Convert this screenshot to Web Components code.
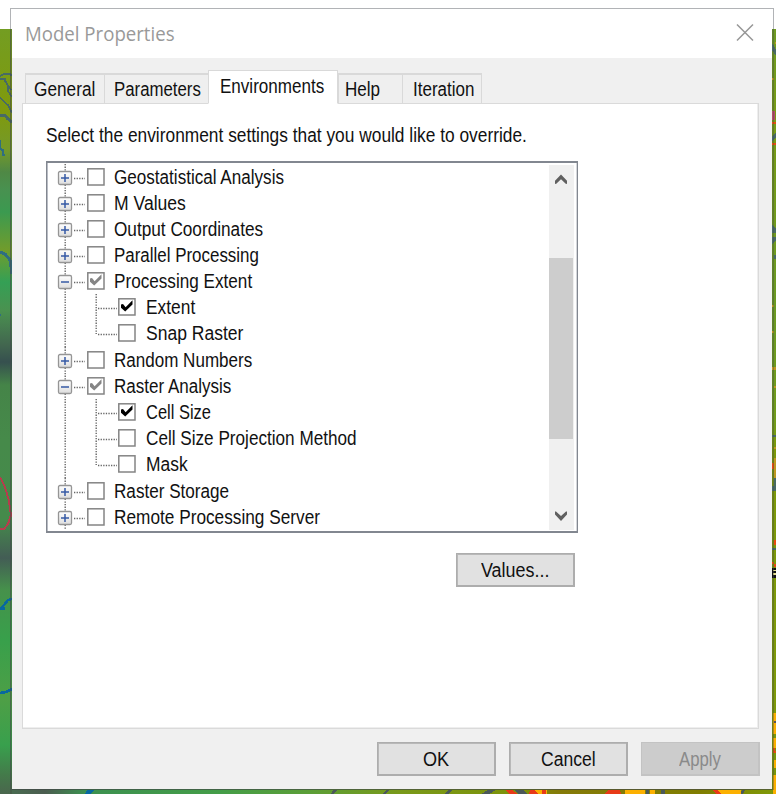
<!DOCTYPE html>
<html lang="en">
<head>
<meta charset="utf-8">
<title>Model Properties</title>
<style>
html,body{margin:0;width:776px;height:794px;overflow:hidden;background:#fff}
body{position:relative;font:19.5px "Liberation Sans",Arial,sans-serif;color:#111}
</style>
</head>
<body>
<map-backdrop></map-backdrop>
<dialog-window>
  <fit-text slot="title" w="150" style="font-family:'Open Sans','Noto Sans',sans-serif;font-size:19.5px;color:#999">Model Properties</fit-text>
  <tab-strip slot="tabs">
    <tab-item style="width:79px;padding-left:8px"><fit-text w="61">General</fit-text></tab-item>
    <tab-item style="width:104px;padding-left:9px"><fit-text w="87">Parameters</fit-text></tab-item>
    <tab-item active style="width:130px;padding-left:11px"><fit-text w="104">Environments</fit-text></tab-item>
    <tab-item style="width:64px;padding-left:6px"><fit-text w="35">Help</fit-text></tab-item>
    <tab-item style="width:80px;padding-left:10px"><fit-text w="61">Iteration</fit-text></tab-item>
  </tab-strip>
  <fit-text slot="prompt" w="481">Select the environment settings that you would like to override.</fit-text>
  <tree-view slot="tree">
    <tree-row w="170">Geostatistical Analysis</tree-row>
    <tree-row w="72">M Values</tree-row>
    <tree-row w="149">Output Coordinates</tree-row>
    <tree-row w="145">Parallel Processing</tree-row>
    <tree-row w="138" open check="mixed">Processing Extent</tree-row>
    <tree-row w="49" child check="on">Extent</tree-row>
    <tree-row w="97" child last tall>Snap Raster</tree-row>
    <tree-row w="138">Random Numbers</tree-row>
    <tree-row w="117" open check="mixed">Raster Analysis</tree-row>
    <tree-row w="65" child check="on">Cell Size</tree-row>
    <tree-row w="211" child>Cell Size Projection Method</tree-row>
    <tree-row w="42" child last tall>Mask</tree-row>
    <tree-row w="115">Raster Storage</tree-row>
    <tree-row w="206">Remote Processing Server</tree-row>
  </tree-view>
  <push-button slot="values"><fit-text w="68">Values...</fit-text></push-button>
  <push-button slot="actions"><fit-text w="26">OK</fit-text></push-button>
  <push-button slot="actions"><fit-text w="55">Cancel</fit-text></push-button>
  <push-button slot="actions" disabled><fit-text w="42">Apply</fit-text></push-button>
</dialog-window>
<script>
const shadow = (el, html) => { el.attachShadow({mode:'open'}).innerHTML = html; return el.shadowRoot; };

/* Text condensed or widened to a set width. */
customElements.define('fit-text', class extends HTMLElement {
  connectedCallback() {
    if (this.shadowRoot) return;
    const w = +this.getAttribute('w');
    const r = shadow(this, `<style>:host{display:block;flex:none;width:${w}px;height:24px;line-height:24px;white-space:nowrap}
      span{display:inline-block;transform-origin:0 50%}</style><span><slot></slot></span>`);
    const s = r.querySelector('span');
    const fit = () => { const n = s.offsetWidth; if (n) s.style.transform = `scaleX(${w / n})`; };
    this.fit = fit; fit();
  }
});

customElements.define('tab-item', class extends HTMLElement {
  connectedCallback() {
    shadow(this, `<style>
      :host{box-sizing:border-box;display:flex;align-items:center;height:30px;padding:0 0 0 9px;border:solid #d9d9d9;border-width:2px 0 0 1px;background:#efefef}
      :host(:last-child){border-right:1px solid #d9d9d9}
      :host([active]){height:34px;border-width:1px;border-bottom-color:#fff;background:#fff;margin-bottom:-1px;padding-top:0;padding-bottom:2px}
    </style><slot></slot>`);
  }
});

customElements.define('tab-strip', class extends HTMLElement {
  connectedCallback() {
    shadow(this, `<style>:host{display:flex;align-items:flex-end;height:33px;padding-left:3px;position:relative}</style><slot></slot>`);
  }
});

customElements.define('push-button', class extends HTMLElement {
  connectedCallback() {
    shadow(this, `<style>
      :host{box-sizing:border-box;display:flex;align-items:center;justify-content:center;width:119px;height:34px;border:solid #adadad;border-width:1px 2px 2px 1px;background:#e1e1e1;box-shadow:inset .5px .5px 0 .5px #b8b8b8}
      :host([disabled]){background:#ccc;border-color:#c3c3c3;color:#8a8a8a;box-shadow:none}
    </style><slot></slot>`);
  }
});

customElements.define('tree-row', class extends HTMLElement {
  connectedCallback() {
    const a = n => this.hasAttribute(n), h = a('tall') ? 27 : 26, child = a('child');
    const bx = child ? 71 : 40, check = this.getAttribute('check');
    let g = `<path d="M18.2 0V${h}" class="dot"/>`;
    if (child) g += `<path d="M49.2 0V${a('last')?14:h}M51 14.5H70" class="dot"/>`;
    else g += `<path d="M27 14.5H38" class="dot"/><rect x="11.5" y="7.5" width="13" height="13" rx="1.5" fill="url(#f)" stroke="#959595" stroke-width="1.3"/>
      <path d="M14 14h8${a('open')?'':'M18 10v8'}" stroke="#365aa5" stroke-width="1.5" fill="none"/>`;
    g += `<rect x="${bx+.8}" y="4.8" width="16.2" height="16.2" fill="#fff" stroke="#848484" stroke-width="1.5"/>`;
    if (check) g += `<path d="M${bx+3} 10.5l2-.5 2.6 3.2L${bx+14.5} 6.2v4.3L${bx+7.2} 17.5 ${bx+3} 13.8z" fill="${check==='on'?'#000':'#858585'}"/>`;
    shadow(this, `<style>
      :host{display:flex;height:${h}px}
      svg{flex:none;display:block}
      fit-text{margin-top:1px}
      .dot{stroke:#666;stroke-width:1.4;stroke-dasharray:1.3 1.3;fill:none}
    </style><svg width="${child?98.5:67}" height="${h}"><defs><linearGradient id="f" x2="0" y2="1"><stop stop-color="#fff"/><stop offset="1" stop-color="#ddd"/></linearGradient></defs>${g}</svg><fit-text w="${this.getAttribute('w')}"><slot></slot></fit-text>`);
  }
});

customElements.define('scroll-bar', class extends HTMLElement {
  connectedCallback() {
    shadow(this, `<style>
      :host{display:flex;flex-direction:column;width:25px;height:366px;background:#f0f0f0}
      svg{display:block}
      i{display:block;width:24px;height:181px;margin-top:63px;background:#cdcdcd}
      .end{margin-top:auto}
    </style><svg width="25" height="30"><path d="M6 15.8l6-6.3 6 6.3v3l-1 .2-5-4.7-5 4.7-1-.2z" fill="#606060"/></svg><i></i>
    <svg class="end" width="25" height="30"><path d="M6 14.6l6 6.3 6-6.3v-3l-1-.2-5 4.7-5-4.7-1 .2z" fill="#606060"/></svg>`);
  }
});

customElements.define('tree-view', class extends HTMLElement {
  connectedCallback() {
    shadow(this, `<style>
      :host{box-sizing:border-box;display:flex;justify-content:space-between;width:532px;height:372px;border:solid #828790;border-width:2px 1px 2px 1px;box-shadow:inset 1px 0 #b8bcc4,inset -1px 0 #d4d6da;background:#fff;padding:0 3px 0 0}
      .rows{flex:1;padding-top:1px}
      scroll-bar{margin-top:2px;height:365px}
    </style><div class="rows"><slot></slot></div><scroll-bar></scroll-bar>`);
  }
});

customElements.define('dialog-window', class extends HTMLElement {
  connectedCallback() {
    shadow(this, `<style>
      :host{display:block;position:relative;box-sizing:border-box;width:764px;height:782px;margin:8px 0 0 10px;padding:0 1px;border:1px solid rgba(70,75,80,.42)}
      header{display:flex;justify-content:space-between;height:49px;background:#fff;box-sizing:border-box;padding:14px 18px 0 13px}
      header slot{display:block;margin-top:-1px}
      main{height:731px;background:#f0f0f0;box-sizing:border-box;padding:12px 13px 0 10px}
      section{box-sizing:border-box;width:737px;height:626px;background:#fff;border:1px solid #dadada;box-shadow:inset -1px -1px #eee;padding:19px 0 0 23px}
      .val{display:flex;padding:20px 0 0 410px}
      .tree{margin-top:14px}
      footer{display:flex;justify-content:flex-end;gap:13px;padding:13px 0 0;margin-right:-1px}
    </style>
    <header><slot name="title"></slot><svg width="18" height="20"><path d="M1 1.5l16 16M17 1.5l-16 16" stroke="#969696" stroke-width="1.5"/></svg></header>
    <main><slot name="tabs"></slot><section><slot name="prompt"></slot><div class="tree"><slot name="tree"></slot></div><div class="val"><slot name="values"></slot></div></section>
    <footer><slot name="actions"></slot></footer></main>`);
  }
});

/* Terrain map behind the dialog, seen only along its edges. */
customElements.define('map-backdrop', class extends HTMLElement {
  connectedCallback() {
    const grad = (id, list, dir) => `<linearGradient id="${id}" gradientUnits="userSpaceOnUse" x1="0" y1="0" ${dir}>` +
      list.map(([p, c]) => `<stop offset="${p / (dir.includes('794') ? 794 : 776)}" stop-color="${c}"/>`).join('') + `</linearGradient>`;
    const L = [[29,'#739d22'],[110,'#809a0c'],[150,'#74992a'],[172,'#4f8845'],[190,'#489150'],[212,'#3b9a50'],[250,'#719c2c'],[282,'#34a055'],[310,'#4a9250'],[345,'#42664f'],[362,'#36504f'],[385,'#458448'],[440,'#468a4a'],[520,'#458a4b'],[558,'#435d55'],[590,'#46914b'],[640,'#38a04b'],[700,'#4e9f46'],[745,'#38a04d'],[775,'#447a4a'],[794,'#4a664d']];
    const R = [[29,'#6e9b22'],[120,'#789b14'],[300,'#6b9a22'],[420,'#719c1a'],[450,'#7c9908'],[700,'#7f9a08'],[794,'#789408']];
    const B = [[0,'#487050'],[45,'#4b5d50'],[85,'#3c9050'],[220,'#449d48'],[310,'#5b9e37'],[400,'#79991a'],[520,'#7d9208'],[560,'#857a08'],[700,'#807d00'],[776,'#7f9a08']];
    shadow(this, `<style>:host{position:absolute;left:0;top:0}svg{display:block}</style>
    <svg width="776" height="794" shape-rendering="crispEdges"><defs>${grad('l',L,'x2="0" y2="794"')}${grad('r',R,'x2="0" y2="794"')}${grad('b',B,'x2="776" y2="0"')}</defs>
    <path d="M0 29h12v765H0z" fill="url(#l)"/><path d="M772 29h4v765h-4z" fill="url(#r)"/><path d="M12 789h760v5H12z" fill="url(#b)"/>
    <g fill="none" stroke="#476a65" stroke-width="1.5"><path d="M0 76l4-2h6l2 2M0 79h5l3 7v5l4 6M3 78l8 12M0 98l8 7 4 8"/><path stroke-width="3" d="M0 115h5l3 4 4 3"/></g>
    <g fill="none" stroke="#2f6e80" stroke-width="2"><path d="M0 140v9l3 1v5h2M0 315h1"/><path stroke-width="3" d="M0 252l5 2 5 6 2 14"/></g>
    <path d="M0 477l5 10 4 14 2 14-3 9-4 5H0" fill="none" stroke="#b63d4c" stroke-width="2"/>
    <path d="M12 599l-4 1-4 5-4 5M12 689l-6 3-6 1" fill="none" stroke="#0868a0" stroke-width="2.5"/><path d="M0 607h5v3H0z" fill="#0868a0"/>
    <path d="M10 29h2v765h-2zM772 29h1v761h-1z" fill="#404840" opacity=".28"/><path d="M12 789h760v1H12z" fill="#384030" opacity=".4"/>
    <g fill="#486a65"><path d="M772 44l2 2 2 4v6l-4-6zM772 137l4-5v5l-4 5zM772 225l4 4v4h-4zM772 237h4v4l-4 3zM774 255h2v4h-2zM772 435h4v2h-4zM774 475h2v16h-4v-5h2zM772 548h4v2h-4z"/></g>
    <path d="M772 111h3v9h-3z" fill="#b84c68"/>
    <path d="M772 122h4v2h-4zM772 143h4v2h-4zM772 463h2v4h2v5h-2v-3h-2zM774 540h2v5h-2zM772 562h2v5h2v-3h-4z" fill="#e74b10"/>
    <g fill="#c09820"><path d="M775 42h1v2h-1zM772 78h2v2h-2zM772 305h2v2h-2zM772 331h2v2h-2zM772 367h4v3h-4zM774 386h2v2h-2zM774 447h2v2h-2zM774 458h2v20h-2z"/></g>
    <path d="M772 568h4v10h-4z" fill="#111"/><path d="M773 570h3v1h-3zM773 573h3v2h-3z" fill="#e8e090"/>
    <path d="M773 713h3v21h-3zM773 738h3v10h-3zM774 760h2v8h-2zM773 775h3v19h-3z" fill="#fcb000"/><path d="M774 721h2v2h-2z" fill="#555"/><path d="M773 748h2l1 5h-3z" fill="#e74b10"/>
    <g fill="#4b595a"><path d="M386 790h4l-5 4h-3zM448 790h4l-4 4h-3zM488 790h8l-7 4h-8zM333 790h4l-3 4h-3zM515 790h8l4 4h-9zM646 790h3v4h-3zM661 790h4v4h-4zM742 790h3l-2 4h-3z"/></g>
    <path d="M87 790h7l-4 4h-5z" fill="#0868a0"/>
    <path d="M625 790h20v4h-20zM650 790h5v4h-5zM716 790h25v4h-25zM533 790h14v4h-14z" fill="#fcb000"/>
    <path d="M505 790h7l6 4h-8zM530 790h5l3 4h-9zM542 790h4v4h-4zM608 790h12l1 4h-16zM713 790h4l4 4h-5z" fill="#e83a18"/>
    </svg>`);
  }
});

/* Refit every label once all elements are in place. */
(function refit(root) {
  root.querySelectorAll('*').forEach(e => { if (e.shadowRoot) refit(e.shadowRoot); if (e.fit) e.fit(); });
})(document);
</script>
</body>
</html>
